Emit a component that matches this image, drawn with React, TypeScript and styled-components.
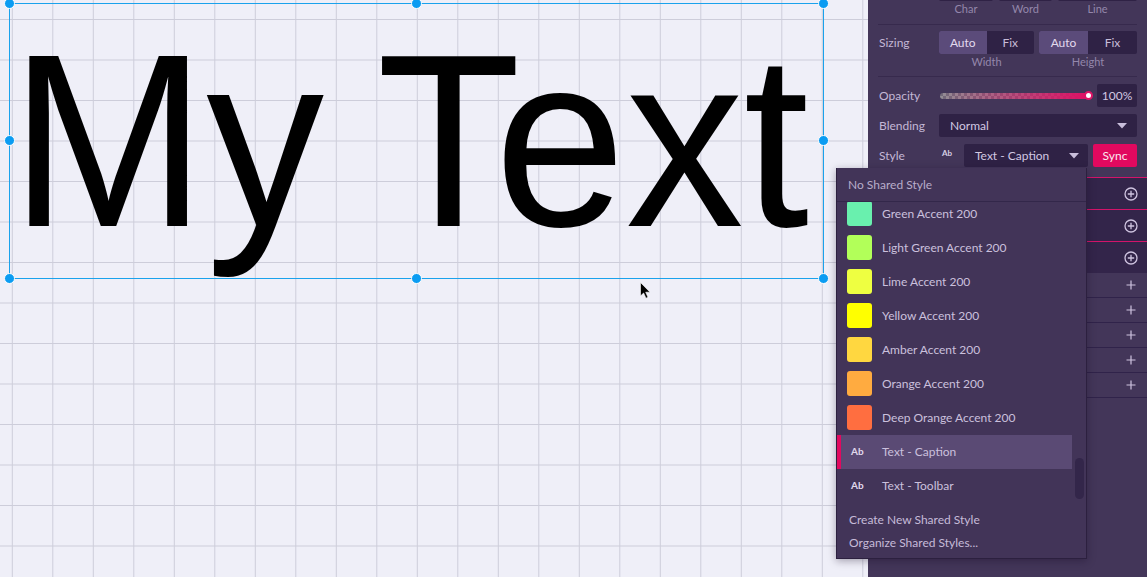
import React from "react";
import styled, { createGlobalStyle } from "styled-components";

const GlobalStyle = createGlobalStyle`
  html, body {
    margin: 0;
    padding: 0;
    overflow: hidden;
  }
  body {
    font-family: Lato, "Noto Sans", sans-serif;
  }
  * {
    box-sizing: border-box;
  }
`;

const swatches = [
  { name: "Green Accent 200", color: "#69f0ae" },
  { name: "Light Green Accent 200", color: "#b2ff59" },
  { name: "Lime Accent 200", color: "#eeff41" },
  { name: "Yellow Accent 200", color: "#ffff00" },
  { name: "Amber Accent 200", color: "#ffd740" },
  { name: "Orange Accent 200", color: "#ffab40" },
  { name: "Deep Orange Accent 200", color: "#ff6e40" },
];

const handles = [
  [9, 3], [416, 3], [823, 3],
  [9, 140], [823, 140],
  [9, 278], [416, 278], [823, 278],
];

const Caret = () => (
  <svg width="10" height="6" viewBox="0 0 10 6">
    <path d="M0 0 H10 L5 5.5 Z" fill="#c9bedb" />
  </svg>
);

const CirclePlus = () => (
  <svg width="14" height="14" viewBox="0 0 14 14">
    <circle cx="7" cy="7" r="6" fill="none" stroke="#cfc4e0" strokeWidth="1.3" />
    <path d="M7 3.8 V10.2 M3.8 7 H10.2" stroke="#cfc4e0" strokeWidth="1.3" />
  </svg>
);

const Plus = () => (
  <svg width="10" height="10" viewBox="0 0 10 10">
    <path d="M5 0.5 V9.5 M0.5 5 H9.5" stroke="#cfc4e0" strokeWidth="1.2" />
  </svg>
);

const App = () => {
  return (
    <Screen>
      <GlobalStyle />
      <Canvas>
        <BigText>My Text</BigText>
        <Selection />
        {handles.map(([x, y]) => (
          <Handle key={`${x}-${y}`} $x={x} $y={y} />
        ))}
        <Cursor width="11" height="17" viewBox="0 0 11 17">
          <path d="M0.5 0.5 V14 L3.6 11 L6 16.2 L8 15.3 L5.7 10.2 H10 Z" fill="#000" stroke="#fff" strokeWidth="0.6" />
        </Cursor>
      </Canvas>

      <Panel>
        <Props>
          <FieldGrid>
            <Field />
            <Field />
            <Field />
          </FieldGrid>
          <FieldGrid $caption>
            <Caption>Char</Caption>
            <Caption>Word</Caption>
            <Caption>Line</Caption>
          </FieldGrid>
          <Divider />
          <Row $top={6}>
            <Label>Sizing</Label>
            <PairGrid>
              <Segmented>
                <SegButton $active>Auto</SegButton>
                <SegButton>Fix</SegButton>
              </Segmented>
              <Segmented>
                <SegButton $active>Auto</SegButton>
                <SegButton>Fix</SegButton>
              </Segmented>
            </PairGrid>
          </Row>
          <CaptionRow>
            <span />
            <PairGrid>
              <Caption>Width</Caption>
              <Caption>Height</Caption>
            </PairGrid>
          </CaptionRow>
          <Divider $top={7} />
          <Row $top={7}>
            <Label>Opacity</Label>
            <OpacityLine>
              <Track>
                <Knob />
              </Track>
              <ValueBox>100%</ValueBox>
            </OpacityLine>
          </Row>
          <Row $top={7}>
            <Label>Blending</Label>
            <Select>
              <span>Normal</span>
              <Caret />
            </Select>
          </Row>
          <Row $top={7}>
            <Label>Style</Label>
            <StyleLine>
              <TinyAb>Ab</TinyAb>
              <Select $compact>
                <span>Text - Caption</span>
                <Caret />
              </Select>
              <SyncButton>Sync</SyncButton>
            </StyleLine>
          </Row>
        </Props>

        <Sections>
          <Section><CirclePlus /></Section>
          <Section><CirclePlus /></Section>
          <Section><CirclePlus /></Section>
          <SubRow><Plus /></SubRow>
          <SubRow><Plus /></SubRow>
          <SubRow><Plus /></SubRow>
          <SubRow><Plus /></SubRow>
          <SubRow><Plus /></SubRow>
        </Sections>
      </Panel>

      <Dropdown>
        <DropHeader>No Shared Style</DropHeader>
        <ListViewport>
          <List>
            {swatches.map((s) => (
              <ListRow key={s.name}>
                <Swatch $color={s.color} />
                <ItemName>{s.name}</ItemName>
              </ListRow>
            ))}
            <ListRow $selected>
              <AbMark>Ab</AbMark>
              <ItemName>Text - Caption</ItemName>
            </ListRow>
            <ListRow>
              <AbMark>Ab</AbMark>
              <ItemName>Text - Toolbar</ItemName>
            </ListRow>
          </List>
          <ScrollThumb />
        </ListViewport>
        <DropFooter>
          <FooterItem>Create New Shared Style</FooterItem>
          <FooterItem>Organize Shared Styles...</FooterItem>
        </DropFooter>
      </Dropdown>
    </Screen>
  );
};

const Screen = styled.div`
  position: relative;
  display: flex;
  width: 1147px;
  height: 577px;
  overflow: hidden;
`;

const Canvas = styled.div`
  position: relative;
  flex: 0 0 868px;
  height: 100%;
  background-color: #efeff8;
  background-image: linear-gradient(to right, #cdcdda 1px, transparent 1px),
    linear-gradient(to bottom, #cdcdda 1px, transparent 1px);
  background-size: 40.5px 40.5px;
  background-position: 11.8px 19px;
`;

const BigText = styled.div`
  position: absolute;
  left: 10px;
  top: 18px;
  width: max-content;
  font-family: "Liberation Sans", Arial, sans-serif;
  font-size: 246px;
  line-height: 246px;
  word-spacing: -9px;
  color: #000;
  white-space: nowrap;
  transform: scaleX(0.958);
  transform-origin: 0 0;
`;

const Selection = styled.div`
  position: absolute;
  left: 9px;
  top: 3px;
  width: 815px;
  height: 276px;
  border: 1px solid #1aa2ec;
`;

const Handle = styled.div<{ $x: number; $y: number }>`
  position: absolute;
  left: ${(p) => p.$x - 5.5}px;
  top: ${(p) => p.$y - 5.5}px;
  width: 11px;
  height: 11px;
  border-radius: 50%;
  background: #0b9cf2;
  border: 1.5px solid #ffffff;
`;

const Cursor = styled.svg`
  position: absolute;
  left: 639.5px;
  top: 282px;
`;

const Panel = styled.aside`
  position: relative;
  flex: 1;
  height: 100%;
  background: #433659;
  color: #c8bdd9;
  font-size: 12px;
  overflow: hidden;
`;

const Props = styled.div`
  padding: 0 10px;
`;

const FieldGrid = styled.div<{ $caption?: boolean }>`
  display: grid;
  grid-template-columns: 54px 53px 79px;
  column-gap: 6px;
  margin-left: 61px;
  margin-top: ${(p) => (p.$caption ? "1px" : "-21px")};
`;

const Field = styled.div`
  height: 22px;
  background: #2f2245;
  border-radius: 2px;
`;

const Caption = styled.div`
  text-align: center;
  font-size: 11px;
  line-height: 14px;
  color: #9487ab;
`;

const Divider = styled.div<{ $top?: number }>`
  height: 1px;
  margin-top: ${(p) => p.$top ?? 8}px;
  background: #372a4d;
`;

const Row = styled.div<{ $top: number }>`
  display: grid;
  grid-template-columns: 61px 1fr;
  align-items: center;
  height: 23px;
  margin-top: ${(p) => p.$top}px;
`;

const CaptionRow = styled.div`
  display: grid;
  grid-template-columns: 61px 1fr;
  margin-top: 1px;
`;

const Label = styled.div`
  font-size: 12px;
  color: #c3b8d6;
  padding-left: 1px;
`;

const PairGrid = styled.div`
  display: grid;
  grid-template-columns: 95px 98px;
  column-gap: 5px;
`;

const Segmented = styled.div`
  display: grid;
  grid-template-columns: 1fr 1fr;
  height: 23px;
  border-radius: 2px;
  overflow: hidden;
  background: #2f2245;
`;

const SegButton = styled.div<{ $active?: boolean }>`
  display: flex;
  align-items: center;
  justify-content: center;
  background: ${(p) => (p.$active ? "#5b4b7a" : "transparent")};
  color: ${(p) => (p.$active ? "#e2daee" : "#c8bdd9")};
  font-size: 12px;
`;

const OpacityLine = styled.div`
  display: flex;
  align-items: center;
  gap: 7px;
`;

const Track = styled.div`
  position: relative;
  flex: 1;
  height: 6px;
  margin-left: 1px;
  border-radius: 3px;
  background: linear-gradient(to right, rgba(220, 20, 100, 0), #dc1466 95%),
    repeating-conic-gradient(#918d94 0 25%, #716b7a 0 50%) 0 0 / 6px 6px;
`;

const Knob = styled.div`
  position: absolute;
  right: -3px;
  top: 50%;
  width: 9px;
  height: 9px;
  margin-top: -4.5px;
  border-radius: 50%;
  background: #fff;
  border: 2px solid #dc1466;
`;

const ValueBox = styled.div`
  width: 40px;
  height: 23px;
  display: flex;
  align-items: center;
  justify-content: center;
  background: #2f2245;
  border-radius: 2px;
  color: #d2c8e2;
`;

const Select = styled.div<{ $compact?: boolean }>`
  display: flex;
  align-items: center;
  justify-content: space-between;
  height: 23px;
  padding: 0 ${(p) => (p.$compact ? "9px 0 11px" : "10px 0 11px")};
  background: #2f2245;
  border-radius: 2px;
  color: #d2c8e2;
`;

const StyleLine = styled.div`
  display: grid;
  grid-template-columns: 25px 124px 1fr;
  align-items: center;
`;

const TinyAb = styled.div`
  font-size: 8px;
  font-weight: 700;
  color: #d9d0e6;
  padding-left: 3px;
  margin-top: -5px;
`;

const SyncButton = styled.div`
  height: 23px;
  margin-left: 5px;
  display: flex;
  align-items: center;
  justify-content: center;
  background: #e1095f;
  border-radius: 2px;
  color: #fbe8f0;
  font-size: 12px;
`;

const Sections = styled.div`
  margin-top: 10px;
`;

const Section = styled.div`
  height: 32px;
  display: flex;
  align-items: center;
  justify-content: flex-end;
  padding-right: 9px;
  background: #33254a;
  border-top: 1px solid #d3146a;
`;

const SubRow = styled.div`
  height: 25px;
  display: flex;
  align-items: center;
  justify-content: flex-end;
  padding-right: 11px;
  border-bottom: 1px solid #30234a;
`;

const Dropdown = styled.div`
  position: absolute;
  left: 836px;
  top: 168px;
  width: 251px;
  height: 391px;
  display: flex;
  flex-direction: column;
  background: #423458;
  border: 1px solid #2c203f;
  border-top: none;
  box-shadow: 0 2px 8px rgba(20, 10, 35, 0.35);
  color: #cbc0dd;
  z-index: 2;
`;

const DropHeader = styled.div`
  height: 34px;
  flex: 0 0 34px;
  display: flex;
  align-items: center;
  padding-left: 11px;
  font-size: 12px;
  color: #b8adca;
  border-bottom: 1px solid #33274a;
`;

const ListViewport = styled.div`
  position: relative;
  height: 300px;
  flex: 0 0 300px;
  overflow: hidden;
`;

const List = styled.div`
  margin-top: -5.5px;
`;

const ListRow = styled.div<{ $selected?: boolean }>`
  position: relative;
  display: flex;
  align-items: center;
  height: 34px;
  margin-right: 14px;
  padding-left: 10px;
  background: ${(p) => (p.$selected ? "#5a4a74" : "transparent")};
  &::before {
    content: "";
    display: ${(p) => (p.$selected ? "block" : "none")};
    position: absolute;
    left: 0;
    top: 0;
    bottom: 0;
    width: 4px;
    background: #e1095f;
  }
`;

const Swatch = styled.div<{ $color: string }>`
  width: 25px;
  height: 25px;
  border-radius: 3px;
  background: ${(p) => p.$color};
`;

const AbMark = styled.div`
  width: 25px;
  padding-left: 4px;
  font-size: 10px;
  font-weight: 700;
  color: #e0d8ec;
  margin-top: -2px;
`;

const ItemName = styled.div`
  margin-left: 10px;
  font-size: 12px;
  color: #cbc0dd;
`;

const ScrollThumb = styled.div`
  position: absolute;
  right: 2px;
  top: 256px;
  width: 9px;
  height: 41px;
  border-radius: 4.5px;
  background: #33264a;
`;

const DropFooter = styled.div`
  padding-top: 6px;
`;

const FooterItem = styled.div`
  height: 23px;
  display: flex;
  align-items: center;
  padding-left: 12px;
  font-size: 12px;
  color: #c6bbd8;
`;

export default App;
